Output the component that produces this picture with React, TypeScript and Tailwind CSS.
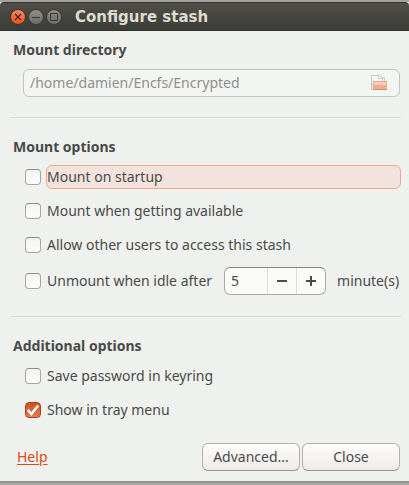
import { useState } from "react";
import type { ReactNode } from "react";

type CheckRowProps = {
  id: string;
  label: string;
  checked: boolean;
  onChange: (checked: boolean) => void;
  highlighted?: boolean;
  children?: ReactNode;
};

const CheckRow = ({ id, label, checked, onChange, highlighted, children }: CheckRowProps) => (
  <div className="flex items-center gap-[5px] pl-[15px]">
    <span className="relative h-4 w-4 shrink-0">
      <input
        id={id}
        type="checkbox"
        checked={checked}
        onChange={(e) => onChange(e.target.checked)}
        className="peer block h-4 w-4 appearance-none rounded border border-[#a5a5a1] border-t-[#8c8c88] bg-linear-to-b from-[#f3f4f2] to-[#fdfdfc] outline-none checked:border-[#a9431f] checked:from-[#cf4f22] checked:to-[#e97a50]"
      />
      <svg viewBox="0 0 16 16" className="pointer-events-none absolute inset-0 hidden h-4 w-4 peer-checked:block">
        <path d="M2.8 7.8 6.3 12 13.2 3.6" fill="none" stroke="#fff" strokeWidth="2.4" />
      </svg>
    </span>
    <label
      htmlFor={id}
      className={
        highlighted
          ? "h-6 flex-1 rounded-md border border-[#f2a88b] bg-[#f2e3df] leading-[22px] whitespace-nowrap"
          : "h-6 border border-transparent leading-[22px] whitespace-nowrap"
      }
    >
      {label}
    </label>
    {children}
  </div>
);

const FolderIcon = () => (
  <svg viewBox="0 0 16 16" className="h-4 w-4">
    <path d="M6 2.5h7.5V7H6z" fill="#f7f7f5" stroke="#cfcfcc" />
    <path d="M.5 14.5V.5h4" fill="none" stroke="#c9c9c6" />
    <path d="M.5.5h8l3 3V8H2v6.5H.5z" fill="#f7f7f5" stroke="#c9c9c6" />
    <path d="M7.5.5v3h3" fill="none" stroke="#c9c9c6" />
    <path d="M2 6h14v9H2z" fill="#efad8f" />
    <path d="M3 7h12v3H3z" fill="#f5cbb2" />
    <path d="M2 6.5h14" stroke="#e9a68c" />
    <path d="M2 14.5h14" stroke="#dc8b7a" />
  </svg>
);

const Separator = () => <hr className="border-0 border-t border-[#dddbd8]" />;

const App = () => {
  const [startup, setStartup] = useState(false);
  const [available, setAvailable] = useState(false);
  const [allowOthers, setAllowOthers] = useState(false);
  const [idle, setIdle] = useState(false);
  const [minutes, setMinutes] = useState(5);
  const [keyring, setKeyring] = useState(false);
  const [tray, setTray] = useState(true);

  return (
    <div className="min-h-screen bg-[#a2a3a0] pt-0.5 font-['Noto_Sans','Open_Sans',sans-serif] text-sm text-[#4a4a48]">
      <main className="bg-[#eff1ee]">
        {/* Title bar */}
        <header className="flex h-[29px] items-center gap-0.5 rounded-t border-t border-b border-t-[#35342f] border-b-[#30302c] bg-linear-to-b from-[#504f47] to-[#3c3d38] pl-[10px]">
          <button
            type="button"
            aria-label="Close window"
            className="flex h-4 w-4 items-center justify-center rounded-full border border-[#4a3027] bg-linear-to-b from-[#f58a62] to-[#e8501f]"
          >
            <svg viewBox="0 0 8 8" className="h-2 w-2">
              <path d="m1 1 6 6m0-6L1 7" stroke="#4a2418" strokeWidth="1.3" />
            </svg>
          </button>
          <button
            type="button"
            aria-label="Minimize"
            className="flex h-4 w-4 items-center justify-center rounded-full border border-[#3b3a35] bg-linear-to-b from-[#8e8c86] to-[#6f6d67]"
          >
            <svg viewBox="0 0 8 8" className="h-2 w-2">
              <path d="M0 4.5h8" stroke="#3a3934" />
            </svg>
          </button>
          <button
            type="button"
            aria-label="Maximize"
            className="flex h-4 w-4 items-center justify-center rounded-full border border-[#3b3a35] bg-linear-to-b from-[#8e8c86] to-[#6f6d67]"
          >
            <svg viewBox="0 0 8 8" className="h-2 w-2">
              <path d="M.5.5h7v7h-7z" fill="none" stroke="#3a3934" />
            </svg>
          </button>
          <h1 className="pl-[11px] font-['DejaVu_Sans',sans-serif] text-[15px] leading-5 font-bold whitespace-nowrap text-[#dfdbd2]">
            Configure stash
          </h1>
        </header>

        <form className="pt-[7px] pr-2 pl-2.5" onSubmit={(e) => e.preventDefault()}>
          {/* Mount directory */}
          <section className="pr-px pb-5">
            <label htmlFor="directory" className="block pl-[3px] leading-6 font-bold">
              Mount directory
            </label>
            <div className="mt-[7px] ml-[13px] flex h-7 items-center rounded-md border border-[#c3c4c1] bg-[#f3f5f2] pr-3 pl-1.5">
              <input
                id="directory"
                readOnly
                value="/home/damien/Encfs/Encrypted"
                className="min-w-0 flex-1 bg-transparent text-[#8f8f8d] outline-none"
              />
              <button type="button" aria-label="Browse">
                <FolderIcon />
              </button>
            </div>
          </section>
          <Separator />

          {/* Mount options */}
          <section className="pt-[17px] pb-[21px]">
            <h2 className="pl-[3px] leading-6 font-bold">Mount options</h2>
            <div className="mt-[6px] flex flex-col gap-2.5">
              <CheckRow id="startup" label="Mount on startup" checked={startup} onChange={setStartup} highlighted />
              <CheckRow id="available" label="Mount when getting available" checked={available} onChange={setAvailable} />
              <CheckRow
                id="others"
                label="Allow other users to access this stash"
                checked={allowOthers}
                onChange={setAllowOthers}
              />
              <CheckRow id="idle" label="Unmount when idle after" checked={idle} onChange={setIdle}>
                <div className="ml-1.5 flex h-7 w-[102px] overflow-hidden rounded-md border border-[#a9aaa7] border-t-[#858682] bg-[#fafbf9]">
                  <input
                    aria-label="Idle minutes"
                    inputMode="numeric"
                    value={minutes}
                    onChange={(e) => setMinutes(Number(e.target.value) || 0)}
                    className="w-0 flex-1 pl-1.5 outline-none"
                  />
                  <button
                    type="button"
                    aria-label="Decrease"
                    onClick={() => setMinutes(Math.max(0, minutes - 1))}
                    className="flex w-[29px] items-center justify-center border-l border-[#dcddda]"
                  >
                    <svg viewBox="0 0 12 12" className="h-3 w-3">
                      <path d="M1 6h10" stroke="#4a4a48" strokeWidth="2" />
                    </svg>
                  </button>
                  <button
                    type="button"
                    aria-label="Increase"
                    onClick={() => setMinutes(minutes + 1)}
                    className="flex w-[29px] items-center justify-center border-l border-[#dcddda]"
                  >
                    <svg viewBox="0 0 12 12" className="h-3 w-3">
                      <path d="M1 6h10M6 1v10" stroke="#4a4a48" strokeWidth="2" />
                    </svg>
                  </button>
                </div>
                <span className="ml-1.5">minute(s)</span>
              </CheckRow>
            </div>
          </section>
          <Separator />

          {/* Additional options */}
          <section className="pt-[17px]">
            <h2 className="pl-[3px] leading-6 font-bold">Additional options</h2>
            <div className="mt-[6px] flex flex-col gap-2.5">
              <CheckRow id="keyring" label="Save password in keyring" checked={keyring} onChange={setKeyring} />
              <CheckRow id="tray" label="Show in tray menu" checked={tray} onChange={setTray} />
            </div>
          </section>

          {/* Actions */}
          <footer className="flex items-center gap-0.5 pt-[21px] pr-px pb-2.5 pl-[7px]">
            <a href="#help" className="mr-auto text-[#dd4814] underline underline-offset-2">
              Help
            </a>
            <button
              type="button"
              className="h-7 w-[98px] rounded-md border border-[#b3b1ae] border-b-[#979592] bg-linear-to-b from-[#fdfdfc] to-[#f0eae8]"
            >
              Advanced...
            </button>
            <button
              type="button"
              className="h-7 w-[98px] rounded-md border border-[#b3b1ae] border-b-[#979592] bg-linear-to-b from-[#fdfdfc] to-[#f0eae8]"
            >
              Close
            </button>
          </footer>
        </form>
      </main>
      <div className="h-1 bg-linear-to-b from-[#8b8c89] to-[#b0b1ae]" />
    </div>
  );
};

export default App;
